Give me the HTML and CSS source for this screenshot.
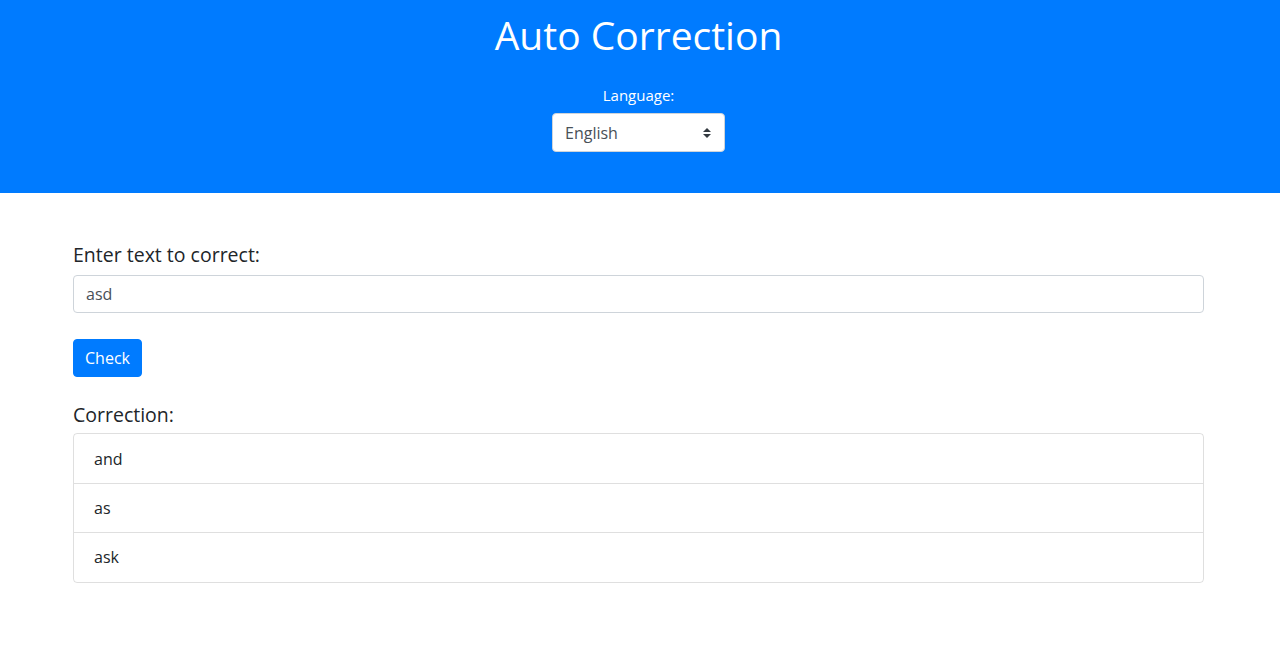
FILE: index.html
```html
<!DOCTYPE html>
<html lang="en">
<head>
<meta charset="utf-8">
<title>Auto Correction</title>
<link rel="stylesheet" href="styles.css">
</head>
<body>
<header class="hero">
  <h1 class="hero-title">Auto Correction</h1>
  <label class="hero-label" for="lang">Language:</label>
  <div class="select-wrap">
    <select id="lang" class="lang-select">
      <option>English</option>
    </select>
    <svg class="select-caret" width="8" height="10" viewBox="0 0 8 10" aria-hidden="true">
      <path d="M4 0 L8 4 H0 Z M4 10 L0 6 H8 Z" fill="#343a40"/>
    </svg>
  </div>
</header>
<main class="main">
  <label class="field-label" for="text">Enter text to correct:</label>
  <input id="text" class="text-input" type="text" value="asd">
  <button class="btn-check" type="button">Check</button>
  <h5 class="result-title">Correction:</h5>
  <ul class="result-list">
    <li class="result-item">and</li>
    <li class="result-item">as</li>
    <li class="result-item">ask</li>
  </ul>
</main>
</body>
</html>
```
FILE: styles.css
```css
* { box-sizing: border-box; }
body {
  margin: 0;
  font-family: "Open Sans", "Noto Sans", sans-serif;
  font-size: 16px;
  line-height: 1.5;
  color: #212529;
  background: #fff;
}
.hero {
  background: #007bff;
  color: #fff;
  padding: 11px 3px 41px 0;
  display: flex;
  flex-direction: column;
  align-items: center;
}
.hero-title {
  margin: 0 0 24px;
  font-size: 39px;
  font-weight: 400;
  line-height: 48px;
}
.hero-label {
  font-size: 15px;
  line-height: 24px;
  margin-bottom: 6px;
}
.select-wrap {
  position: relative;
  width: 173px;
}
.lang-select {
  appearance: none;
  -webkit-appearance: none;
  width: 100%;
  height: 39px;
  padding: 6px 28px 6px 12px;
  font: inherit;
  font-size: 16px;
  color: #495057;
  background: #fff;
  border: 1px solid #ced4da;
  border-radius: 4px;
}
.select-caret {
  position: absolute;
  right: 14px;
  top: 15px;
  pointer-events: none;
}
.main {
  padding: 50px 76px 0 73px;
  display: flex;
  flex-direction: column;
  align-items: flex-start;
}
.field-label {
  font-size: 19.5px;
  line-height: 24px;
  margin-bottom: 8px;
}
.text-input {
  width: 100%;
  height: 38px;
  padding: 6px 12px;
  font: inherit;
  font-size: 16px;
  color: #495057;
  border: 1px solid #ced4da;
  border-radius: 4px;
  margin-bottom: 26px;
}
.btn-check {
  height: 38px;
  padding: 6px 11px;
  font: inherit;
  font-size: 16px;
  color: #fff;
  background: #007bff;
  border: 1px solid #007bff;
  border-radius: 4px;
  margin-bottom: 26px;
}
.result-title {
  margin: 0 0 6px;
  font-size: 19.5px;
  font-weight: 400;
  line-height: 24px;
}
.result-list {
  width: 100%;
  margin: 0;
  padding: 0;
  list-style: none;
  border: 1px solid rgba(0,0,0,.125);
  border-radius: 4px;
}
.result-item {
  padding: 12px 20px;
  line-height: 24px;
}
.result-item:first-child { padding-top: 13px; }
.result-item:last-child { padding-bottom: 13px; }
.result-item + .result-item {
  border-top: 1px solid rgba(0,0,0,.125);
}
```
